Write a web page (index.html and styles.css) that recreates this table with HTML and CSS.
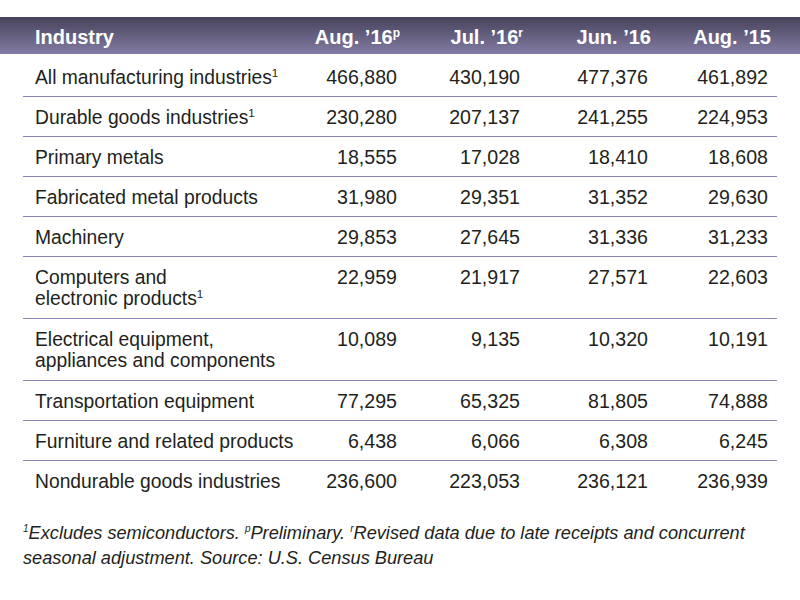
FILE: index.html
```html
<!DOCTYPE html>
<html lang="en">
<head>
<meta charset="utf-8">
<title>Manufacturers' shipments</title>
<link rel="stylesheet" href="styles.css">
</head>
<body>
<div class="page">
  <div class="head-bar">
    <div class="row head">
      <div class="cell name">Industry</div>
      <div class="cell num">Aug. ’16<sup>p</sup></div>
      <div class="cell num">Jul. ’16<sup>r</sup></div>
      <div class="cell num">Jun. ’16</div>
      <div class="cell num">Aug. ’15</div>
    </div>
  </div>
  <div class="body">
    <div class="row">
      <div class="cell name">All manufacturing industries<sup>1</sup></div>
      <div class="cell num">466,880</div><div class="cell num">430,190</div><div class="cell num">477,376</div><div class="cell num">461,892</div>
    </div>
    <div class="row">
      <div class="cell name">Durable goods industries<sup>1</sup></div>
      <div class="cell num">230,280</div><div class="cell num">207,137</div><div class="cell num">241,255</div><div class="cell num">224,953</div>
    </div>
    <div class="row">
      <div class="cell name">Primary metals</div>
      <div class="cell num">18,555</div><div class="cell num">17,028</div><div class="cell num">18,410</div><div class="cell num">18,608</div>
    </div>
    <div class="row">
      <div class="cell name">Fabricated metal products</div>
      <div class="cell num">31,980</div><div class="cell num">29,351</div><div class="cell num">31,352</div><div class="cell num">29,630</div>
    </div>
    <div class="row">
      <div class="cell name">Machinery</div>
      <div class="cell num">29,853</div><div class="cell num">27,645</div><div class="cell num">31,336</div><div class="cell num">31,233</div>
    </div>
    <div class="row tall">
      <div class="cell name">Computers and<br>electronic products<sup>1</sup></div>
      <div class="cell num">22,959</div><div class="cell num">21,917</div><div class="cell num">27,571</div><div class="cell num">22,603</div>
    </div>
    <div class="row tall">
      <div class="cell name">Electrical equipment,<br>appliances and components</div>
      <div class="cell num">10,089</div><div class="cell num">9,135</div><div class="cell num">10,320</div><div class="cell num">10,191</div>
    </div>
    <div class="row">
      <div class="cell name">Transportation equipment</div>
      <div class="cell num">77,295</div><div class="cell num">65,325</div><div class="cell num">81,805</div><div class="cell num">74,888</div>
    </div>
    <div class="row">
      <div class="cell name">Furniture and related products</div>
      <div class="cell num">6,438</div><div class="cell num">6,066</div><div class="cell num">6,308</div><div class="cell num">6,245</div>
    </div>
    <div class="row last">
      <div class="cell name">Nondurable goods industries</div>
      <div class="cell num">236,600</div><div class="cell num">223,053</div><div class="cell num">236,121</div><div class="cell num">236,939</div>
    </div>
  </div>
  <p class="note"><sup>1</sup>Excludes semiconductors. <sup>p</sup>Preliminary. <sup>r</sup>Revised data due to late receipts and concurrent seasonal adjustment. Source: U.S. Census Bureau</p>
</div>
</body>
</html>
```

FILE: styles.css
```css
html, body {
  margin: 0;
  padding: 0;
  background: #ffffff;
}

.page {
  width: 800px;
  padding-top: 17px;
  font-family: "Liberation Sans", Arial, sans-serif;
  color: #231f20;
}

.head-bar {
  height: 37px;
  padding: 0 23px;
  background: linear-gradient(to bottom, #47425a 0%, #837ca5 100%);
}

.row {
  display: grid;
  grid-template-columns: 274px 100px 123px 128px 120px;
  padding-right: 9px;
  font-size: 19.3px;
  line-height: 21px;
}

.head {
  height: 37px;
  box-sizing: border-box;
  padding-top: 3px;
  align-items: center;
  color: #ffffff;
  font-weight: bold;
  font-size: 20px;
}

.head .num {
  margin-right: -3px;
}

.body {
  margin: 0 23px;
  padding-top: 3px;
}

.body .row {
  padding-top: 10px;
  padding-bottom: 8px;
  border-bottom: 1px solid #8a85b6;
}

.body .row.tall {
  padding-bottom: 9px;
}

.body .row.last {
  border-bottom: none;
}

.cell.name {
  padding-left: 12px;
  white-space: nowrap;
}

.cell.num {
  text-align: right;
}

.body .cell.num {
  font-size: 19.6px;
}

sup {
  font-size: 0.6em;
  line-height: 0;
  vertical-align: 0.6em;
}

.head sup {
  font-size: 0.6em;
  vertical-align: 0.55em;
}

.note {
  margin: 21px 23px 0;
  font-family: "Liberation Sans", Arial, sans-serif;
  font-style: italic;
  font-size: 18.2px;
  line-height: 25px;
  color: #231f20;
}

.note sup {
  font-size: 0.55em;
  vertical-align: 0.7em;
}
```
